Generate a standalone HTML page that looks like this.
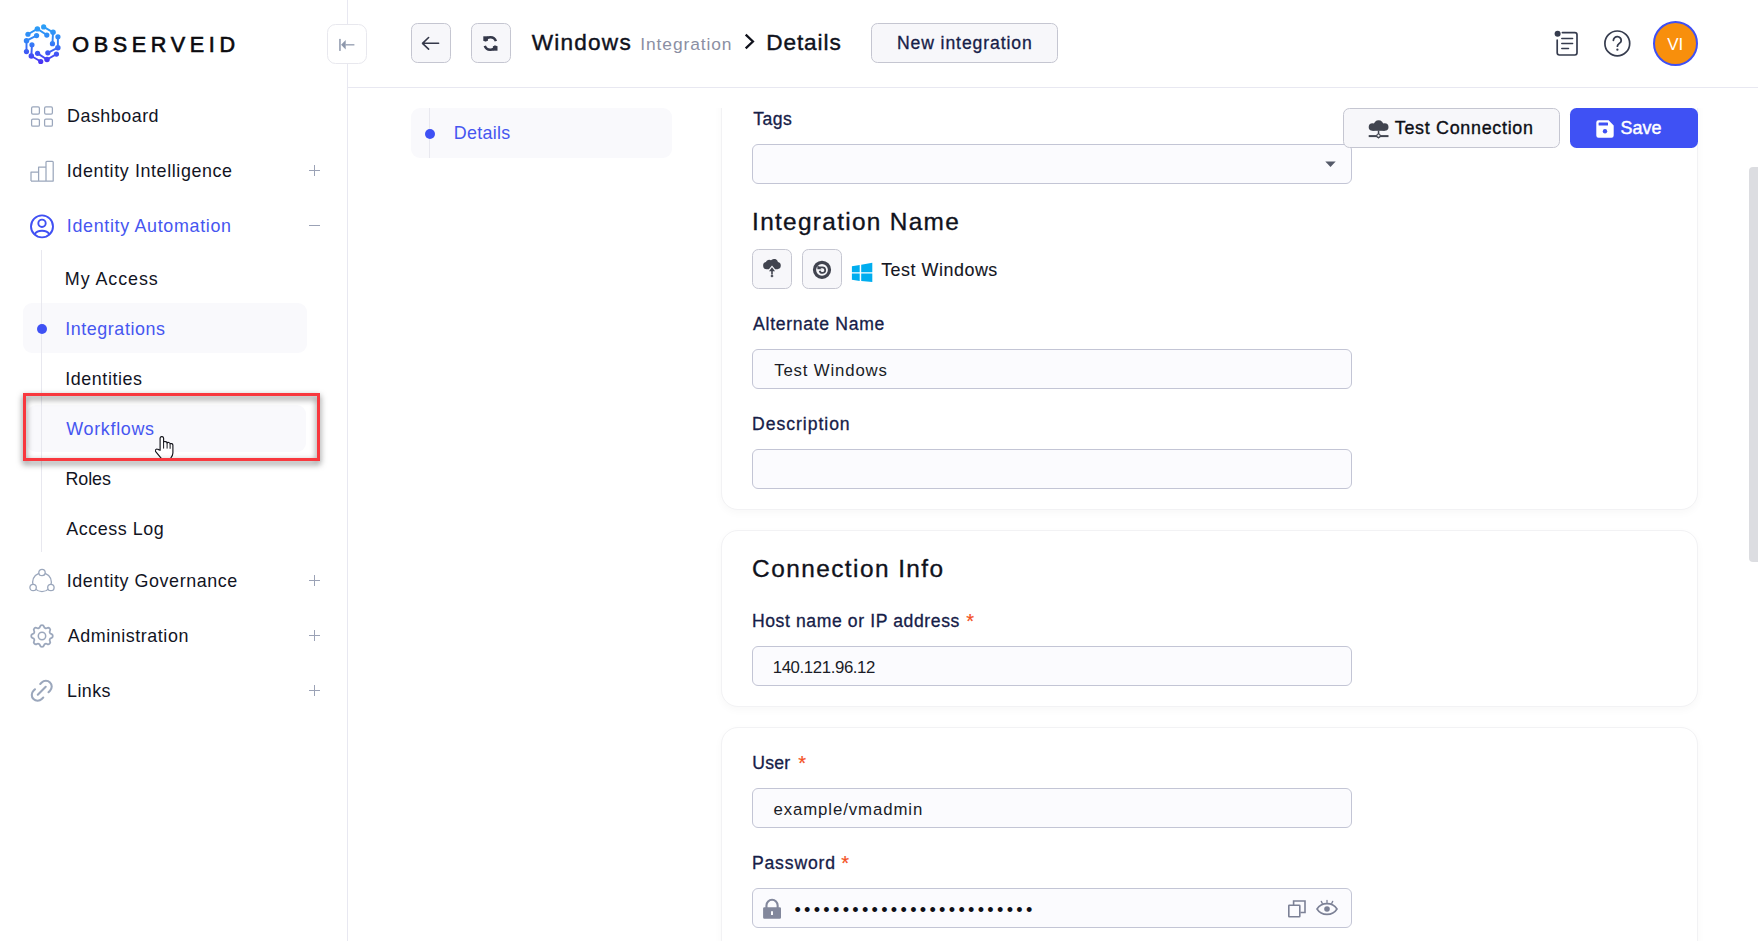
<!DOCTYPE html>
<html lang="en"><head><meta charset="utf-8"><title>ObserveID - Windows Integration Details</title>
<style>
*{box-sizing:border-box}
html,body{margin:0;padding:0}
body{width:1758px;height:941px;overflow:hidden;position:relative;background:#fff;font-family:"Liberation Sans",sans-serif;color:#12141f}
.t{position:absolute;white-space:nowrap;line-height:1;font-family:"Liberation Sans",sans-serif}
.abs{position:absolute}
svg{position:absolute;overflow:visible}
#sidebar{position:absolute;left:0;top:0;width:348px;height:941px;border-right:1px solid #e8e8f1;background:#fff}
#topbar{position:absolute;left:348px;top:0;width:1410px;height:88px;border-bottom:1px solid #e8e8f1;background:#fff}
.sqbtn{position:absolute;width:40px;height:40px;border:1px solid #c5c6d1;border-radius:6.5px;background:#f7f7fa}
.obtn{position:absolute;height:40px;border:1px solid #c5c6d1;border-radius:6.5px;background:#f7f7fa}
.card{position:absolute;left:721px;width:977px;background:#fff;border:1px solid #f2f2f4;border-radius:17px;box-shadow:0 3px 9px rgba(0,0,0,.03)}
.inp{position:absolute;left:752px;width:600px;height:40px;border:1px solid #c3c5d5;border-radius:6px;background:#fbfbfe}
.sel{position:absolute;border-radius:9px;background:#f9f9fc}
.dot{position:absolute;width:10px;height:10px;border-radius:50%;background:#3f51f4}
.vline{position:absolute;width:1px;background:#e8e8ef}
.pm{position:absolute;background:#9ba2b6}

</style></head>
<body>
<div id="sidebar"></div>
<div id="topbar"></div>

<!-- logo -->
<svg id="logo" style="left:20.600px;top:22.700px" width="42.400" height="42.400" viewBox="-22 -22 44 44">
  <defs>
    <linearGradient id="lg" gradientUnits="userSpaceOnUse" x1="0" y1="-19" x2="0" y2="19">
      <stop offset="0" stop-color="#2b9ff7"/><stop offset="0.45" stop-color="#3380f6"/><stop offset="1" stop-color="#4a33f3"/>
    </linearGradient>
  </defs>
  <g fill="none" stroke="url(#lg)" stroke-width="2" stroke-linejoin="round"><polyline points="-14.80,-10.30 -5.00,-15.90 4.80,-9.50"/><polyline points="1.52,-17.97 11.27,-12.28 10.63,-0.59"/><polyline points="16.32,-7.67 16.27,3.62 5.83,8.91"/><polyline points="14.80,10.30 5.00,15.90 -4.80,9.50"/><polyline points="-1.52,17.97 -11.27,12.28 -10.63,0.59"/><polyline points="-16.32,7.67 -16.27,-3.62 -5.83,-8.91"/></g>
  <g fill="url(#lg)"><circle cx="-14.80" cy="-10.30" r="2.7"/><circle cx="-5.00" cy="-15.90" r="2.85"/><circle cx="4.80" cy="-9.50" r="2.7"/><circle cx="1.52" cy="-17.97" r="2.7"/><circle cx="11.27" cy="-12.28" r="2.85"/><circle cx="10.63" cy="-0.59" r="2.7"/><circle cx="16.32" cy="-7.67" r="2.7"/><circle cx="16.27" cy="3.62" r="2.85"/><circle cx="5.83" cy="8.91" r="2.7"/><circle cx="14.80" cy="10.30" r="2.7"/><circle cx="5.00" cy="15.90" r="2.85"/><circle cx="-4.80" cy="9.50" r="2.7"/><circle cx="-1.52" cy="17.97" r="2.7"/><circle cx="-11.27" cy="12.28" r="2.85"/><circle cx="-10.63" cy="0.59" r="2.7"/><circle cx="-16.32" cy="7.67" r="2.7"/><circle cx="-16.27" cy="-3.62" r="2.85"/><circle cx="-5.83" cy="-8.91" r="2.7"/></g>
</svg>

<!-- collapse button -->
<div class="abs" style="left:327px;top:24px;width:40px;height:40px;border:1px solid #e8e8ee;border-radius:8.500px;background:#fff"></div>
<svg style="left:338px;top:37px" width="18" height="16" viewBox="0 0 18 16" fill="#8e98ac" stroke="none">
  <rect x="1.200" y="1.900" width="1.500" height="12"/><path d="M3.100 7.800L7.700 3v9.600z"/><rect x="7.500" y="7.200" width="8.900" height="1.250"/>
</svg>

<!-- nav icons -->
<svg style="left:30px;top:105px" width="24" height="24" viewBox="0 0 24 24" fill="none" stroke="#9ba7bc" stroke-width="1.25">
  <rect x="1.6" y="1.9" width="7.8" height="7.2" rx="1.3"/><rect x="14.6" y="1.9" width="7.8" height="7.2" rx="1.3"/>
  <rect x="1.6" y="14" width="7.8" height="7.2" rx="1.3"/><rect x="14.6" y="14" width="7.8" height="7.2" rx="1.3"/>
</svg>
<svg style="left:30px;top:160px" width="24" height="24" viewBox="0 0 24 24" fill="none" stroke="#9ba7bc" stroke-width="1.25" stroke-linejoin="round">
  <path d="M1 21V12h7.6v9M8.6 21V7h7.4v14M16 21V2.2a.8.8 0 0 1 .8-.8h5.6a.8.8 0 0 1 .8.8V21z M1 21h22"/>
</svg>
<svg style="left:30px;top:214px" width="24" height="25" viewBox="0 0 24 25" fill="none" stroke="#4050f3" stroke-width="1.9" stroke-linecap="round">
  <circle cx="12" cy="12.4" r="11"/><circle cx="12" cy="9.3" r="3.7"/><path d="M4.6 20.3c1.3-2.4 4-3.6 7.4-3.6s6.100 1.200 7.400 3.600"/>
</svg>
<svg style="left:29px;top:568px" width="26" height="26" viewBox="0 0 26 26" fill="#fff" stroke="#9ba7bc" stroke-width="1.3">
  <circle cx="13" cy="14.200" r="9.400" fill="none"/><circle cx="13" cy="4.500" r="3.200"/><circle cx="4.100" cy="19.500" r="3.200"/><circle cx="21.900" cy="19.500" r="3.200"/>
</svg>
<svg style="left:30px;top:624px" width="24" height="24" viewBox="0 0 24 24" fill="none" stroke="#9ba7bc" stroke-width="1.5" stroke-linecap="round" stroke-linejoin="round">
  <path d="M10.325 4.317c.426-1.756 2.924-1.756 3.350 0a1.724 1.724 0 0 0 2.573 1.066c1.543-.94 3.310.826 2.370 2.370a1.724 1.724 0 0 0 1.065 2.572c1.756.426 1.756 2.924 0 3.350a1.724 1.724 0 0 0-1.066 2.573c.940 1.543-.826 3.310-2.370 2.370a1.724 1.724 0 0 0-2.572 1.065c-.426 1.756-2.924 1.756-3.350 0a1.724 1.724 0 0 0-2.573-1.066c-1.543.940-3.310-.826-2.370-2.370a1.724 1.724 0 0 0-1.065-2.572c-1.756-.426-1.756-2.924 0-3.350a1.724 1.724 0 0 0 1.066-2.573c-.940-1.543.826-3.310 2.370-2.370 1 .608 2.296.070 2.572-1.065z" transform="translate(-2.400 -2.400) scale(1.2)"/>
  <circle cx="12" cy="12" r="3.700"/>
</svg>
<svg style="left:29.150px;top:677.650px" width="25.500" height="25.500" viewBox="0 0 24 24" fill="none" stroke="#9ba7bc" stroke-width="1.950" stroke-linecap="round" stroke-linejoin="round">
  <g transform="rotate(-45 12 12)"><path d="M15.500 6.500h2a5.500 5.500 0 0 1 0 11h-2m-7 0h-2a5.500 5.500 0 0 1 0-11h2"/><path d="M6.700 12h10.600"/></g>
</svg>

<!-- plus / minus -->
<div class="pm" style="left:309px;top:170px;width:11px;height:1px"></div><div class="pm" style="left:314px;top:165px;width:1px;height:11px"></div>
<div class="pm" style="left:309px;top:225px;width:11px;height:1px"></div>
<div class="pm" style="left:309px;top:580px;width:11px;height:1px"></div><div class="pm" style="left:314px;top:575px;width:1px;height:11px"></div>
<div class="pm" style="left:309px;top:635px;width:11px;height:1px"></div><div class="pm" style="left:314px;top:630px;width:1px;height:11px"></div>
<div class="pm" style="left:309px;top:690px;width:11px;height:1px"></div><div class="pm" style="left:314px;top:685px;width:1px;height:11px"></div>

<!-- submenu -->
<div class="sel" style="left:23px;top:303px;width:283.500px;height:49.500px"></div>
<div class="sel" style="left:27px;top:404.500px;width:279px;height:47.500px;background:#f9f9fc"></div>
<div class="vline" style="left:41px;top:250px;height:302px"></div>
<div class="dot" style="left:37px;top:324px"></div>
<!-- hand cursor -->
<svg style="left:155px;top:436px;overflow:hidden" width="19" height="23.5" viewBox="0 0 19 23.5" fill="#fff" stroke="#14151c" stroke-width="1.15" stroke-linejoin="round" stroke-linecap="round">
  <path d="M5.100 14.300V2.300a1.750 1.750 0 0 1 3.500 0V6.200c.300-1 3.300-.900 3.500.700.500-.900 2.900-.500 3 .900.800-.700 2.800-.200 2.800 1.500v7.600c0 2.400-1.100 3.800-2.400 5.600V25H6.500v-2.300L.700 15.600c-1.100-1.400.700-3.300 2.200-2.200z"/>
  <path d="M8.600 6.200v6M12.100 7.200v5M15.100 8.200v4.200" fill="none" stroke-width="1"/>
</svg>
<!-- red highlight box -->
<div class="abs" style="left:23px;top:393px;width:297px;height:68px;border:3px solid #f8383e;filter:drop-shadow(0 3px 3px rgba(0,0,0,.58))"></div>

<!-- header buttons -->
<div class="sqbtn" style="left:411px;top:23px"></div>
<svg style="left:421px;top:35px" width="20" height="16" viewBox="0 0 20 16" fill="none" stroke="#343849" stroke-width="1.600" stroke-linecap="round" stroke-linejoin="round"><path d="M17.600 8.300H1.500M7.600 2.500L1.500 8.300l6.100 5.800"/></svg>
<div class="sqbtn" style="left:471px;top:23px"></div>
<svg style="left:482px;top:35px" width="17" height="17" viewBox="0 0 17 17" fill="none" stroke="#343849" stroke-width="2.5">
  <path d="M3.000 6.400A5.700 5.700 0 0 1 13.900 6.100"/><path d="M13.700 10.600A5.700 5.700 0 0 1 2.800 10.900"/>
  <path d="M1.300 1.300h4.600v4.600h-4.600z" fill="#343849" stroke="none"/><path d="M10.900 11.100h4.600v4.600h-4.600z" fill="#343849" stroke="none"/>
</svg>
<svg style="left:744px;top:33px" width="12" height="17" viewBox="0 0 12 17" fill="none" stroke="#10121c" stroke-width="2.300" stroke-linecap="butt" stroke-linejoin="miter"><path d="M1.700 1.700l7.200 6.800-7.200 6.800"/></svg>
<div class="obtn" style="left:871px;top:23px;width:187px"></div>

<!-- header right icons -->
<svg style="left:1553px;top:29px" width="27" height="29" viewBox="0 0 27 29" fill="none" stroke="#363c4e" stroke-width="1.700" stroke-linecap="round" stroke-linejoin="round">
  <path d="M9.400 3.600h12.400a2.200 2.200 0 0 1 2.200 2.200v18a2.200 2.200 0 0 1-2.200 2.200H6.400a2.200 2.200 0 0 1-2.200-2.200V11.200"/>
  <path d="M8.800 9.500h10.800M8.800 14.500h10.800M8.800 19.500h6.700" stroke-width="1.500"/>
  <circle cx="4.600" cy="4.800" r="3" fill="#363c4e" stroke="none"/>
</svg>
<svg style="left:1603px;top:29px" width="29" height="29" viewBox="0 0 29 29" fill="none" stroke="#363c4e" stroke-width="1.700" stroke-linecap="round" stroke-linejoin="round">
  <circle cx="14.300" cy="14.400" r="12.400"/><path d="M10.400 11.300a3.900 3.900 0 0 1 7.800.4c0 2.500-3.800 2.900-3.800 5.500" stroke-width="1.800"/><circle cx="14.400" cy="20.700" r="1.150" fill="#363c4e" stroke="none"/>
</svg>
<div class="abs" style="left:1653px;top:21px;width:45px;height:45px;border-radius:50%;background:#f88f0c;border:2px solid #3f50f4"></div>

<!-- detail tab -->
<div class="sel" style="left:411px;top:108px;width:261px;height:50px"></div>
<div class="vline" style="left:429px;top:108px;height:50px"></div>
<div class="dot" style="left:424.500px;top:128.800px"></div>

<!-- cards -->
<div class="abs" style="left:700px;top:108px;width:1040px;height:833px;overflow:hidden">
  <div class="card" style="left:21px;top:-60px;height:462px"></div>
  <div class="card" style="left:21px;top:422px;height:177px"></div>
  <div class="card" style="left:21px;top:619px;height:400px"></div>
</div>

<!-- inputs -->
<div class="inp" style="top:144px"></div>
<svg style="left:1325px;top:161px" width="11" height="6" viewBox="0 0 11 6"><path d="M0.300 0.600h10.400L5.500 6z" fill="#555a69"/></svg>
<div class="inp" style="top:349px"></div>
<div class="inp" style="top:449px"></div>
<div class="inp" style="top:646px"></div>
<div class="inp" style="top:788px"></div>
<div class="inp" style="top:888px"></div>

<!-- action buttons -->
<div class="obtn" style="left:1343px;top:108px;width:217px"></div>
<svg style="left:1367px;top:119px" width="23" height="21" viewBox="0 0 23 21" fill="#40444f" stroke="none">
  <circle cx="5.500" cy="8" r="3.800"/><circle cx="11.600" cy="6.100" r="4.900"/><circle cx="17.700" cy="8" r="3.800"/><rect x="5.500" y="7" width="12.200" height="4.800"/>
  <rect x="10.800" y="11.600" width="1.500" height="3.500"/><rect x="1.700" y="16.100" width="19.800" height="2"/>
  <path d="M9.800 18.100h3.400l-1.700 1.600z"/>
  <circle cx="11.500" cy="16.700" r="1.700" fill="#f7f7fa" stroke="#40444f" stroke-width="1.100"/>
</svg>
<div class="abs" style="left:1570px;top:108px;width:128px;height:40px;border-radius:6.5px;background:#3f51f4"></div>
<svg style="left:1596px;top:120px" width="18" height="18" viewBox="0 0 18 18"><path d="M2.500 0.300h10.100l5.100 5.100v10.100a2.200 2.200 0 0 1-2.200 2.200h-13a2.200 2.200 0 0 1-2.200-2.200v-13A2.200 2.200 0 0 1 2.500.300z" fill="#fff"/><rect x="2.600" y="2.600" width="9.400" height="3" rx=".5" fill="#3f51f4"/><circle cx="9" cy="11.300" r="2.200" fill="#3f51f4"/></svg>

<!-- integration name row -->
<div class="sqbtn" style="left:752px;top:249px"></div>
<svg style="left:762px;top:259px" width="20" height="19" viewBox="0 0 20 19" fill="#41444f">
  <path d="M4.600 10.200a3.600 3.600 0 0 1-.700-7.100 3.700 3.700 0 0 1 5.100-1.800 4.100 4.100 0 0 1 6.900 1.600 3.700 3.700 0 0 1-.500 7.300h-2.300L10 6.600l-3.100 3.600z"/>
  <path d="M10 8.300l3 3.900h-2.200v3.200h-1.600v-3.200H7z"/><path d="M10 15.600l1.600 1.500-1.600 1.500-1.600-1.500z"/>
</svg>
<div class="sqbtn" style="left:802px;top:249px"></div>
<svg style="left:812px;top:260px" width="20" height="20" viewBox="0 0 20 20" fill="none">
  <circle cx="10" cy="9.800" r="7.500" stroke="#41444f" stroke-width="3.200"/>
  <path d="M6.800 7.300h3.600a2.800 2.800 0 1 1-2.700 3.400" stroke="#41444f" stroke-width="1.800" fill="none"/><path d="M5.400 5.100v4.200h4.200z" fill="#41444f"/>
</svg>
<svg style="left:851px;top:262px" width="22" height="21" viewBox="0 0 22 21" fill="#00adef">
  <path d="M0.900 4.300L8.700 3.100v7.100H0.900zM10.200 2.850L21.300 0.800v9.400H10.200zM0.900 11.600h7.800v7.300L0.900 17.800zM10.200 11.600h11.100V20L10.200 19.100z"/>
</svg>

<!-- password field -->
<svg style="left:762px;top:898px" width="20" height="21" viewBox="0 0 20 21" fill="#82879c">
  <path d="M3.400 10V7.400a6.650 6.650 0 0 1 13.300 0V10h-2.100V7.400a4.550 4.550 0 0 0-9.100 0V10z"/><path d="M2.400 9.300h15.300a1.300 1.300 0 0 1 1.300 1.300v8.800a1.300 1.300 0 0 1-1.300 1.300H2.400a1.300 1.300 0 0 1-1.300-1.300v-8.800a1.300 1.300 0 0 1 1.300-1.300zM9 13.200v3.800h2v-3.800z" fill-rule="evenodd"/>
</svg>

<svg style="left:1288px;top:900px" width="18" height="18" viewBox="0 0 18 18" fill="none" stroke="#7c8196" stroke-width="1.600"><rect x="0.800" y="5.200" width="11" height="11.500" rx="0.500"/><path d="M5.600 5V1h11.400v11.500h-4.600"/></svg>
<svg style="left:1316px;top:899px" width="22" height="17" viewBox="0 0 22 17" fill="none" stroke="#7c8196" stroke-width="1.600" stroke-linecap="round">
  <path d="M1 10c2.300-3.700 5.800-5.400 10-5.400s7.700 1.700 10 5.400c-2.300 3.700-5.800 5.400-10 5.400S3.300 13.700 1 10z"/><circle cx="11" cy="10" r="2.800" fill="#7c8196" stroke="none"/>
  <path d="M11 3.500V1.300M6.300 4.400L5.300 2.400M15.700 4.400l1-2" stroke-width="1.300"/>
</svg>

<!-- scrollbar -->
<div class="abs" style="left:1749px;top:167px;width:9px;height:395px;background:#dcdde1;border-radius:4px 0 0 4px"></div>

<span class="t" id="t0" style="left:72.19px;top:33.72px;font-size:21.6px;color:#0b0b0f;letter-spacing:4.659px;-webkit-text-stroke:0.65px #0b0b0f;">OBSERVEID</span>
<span class="t" id="t1" style="left:67.05px;top:107.85px;font-size:17.9px;color:#12141f;letter-spacing:0.500px;">Dashboard</span>
<span class="t" id="t2" style="left:66.79px;top:162.85px;font-size:17.9px;color:#12141f;letter-spacing:0.605px;">Identity Intelligence</span>
<span class="t" id="t3" style="left:66.79px;top:217.85px;font-size:17.9px;color:#4656f0;letter-spacing:0.670px;">Identity Automation</span>
<span class="t" id="t4" style="left:64.83px;top:270.85px;font-size:17.9px;color:#12141f;letter-spacing:0.921px;">My Access</span>
<span class="t" id="t5" style="left:65.22px;top:320.85px;font-size:17.9px;color:#4656f0;letter-spacing:0.566px;">Integrations</span>
<span class="t" id="t6" style="left:65.22px;top:370.85px;font-size:17.9px;color:#12141f;letter-spacing:0.581px;">Identities</span>
<span class="t" id="t7" style="left:66.32px;top:420.85px;font-size:17.9px;color:#4656f0;letter-spacing:0.691px;">Workflows</span>
<span class="t" id="t8" style="left:65.48px;top:470.85px;font-size:17.9px;color:#12141f;letter-spacing:-0.065px;">Roles</span>
<span class="t" id="t9" style="left:66.31px;top:520.85px;font-size:17.9px;color:#12141f;letter-spacing:0.549px;">Access Log</span>
<span class="t" id="t10" style="left:66.79px;top:572.85px;font-size:17.9px;color:#12141f;letter-spacing:0.572px;">Identity Governance</span>
<span class="t" id="t11" style="left:67.87px;top:627.85px;font-size:17.9px;color:#12141f;letter-spacing:0.548px;">Administration</span>
<span class="t" id="t12" style="left:67.05px;top:682.85px;font-size:17.9px;color:#12141f;letter-spacing:0.438px;">Links</span>
<span class="t" id="t13" style="left:531.74px;top:31.87px;font-size:22.6px;color:#10121c;letter-spacing:1.214px;-webkit-text-stroke:0.42px #10121c;">Windows</span>
<span class="t" id="t14" style="left:640.33px;top:36.27px;font-size:17.4px;color:#8b8fa3;letter-spacing:0.893px;">Integration</span>
<span class="t" id="t15" style="left:766.24px;top:31.87px;font-size:22.6px;color:#10121c;letter-spacing:0.903px;-webkit-text-stroke:0.42px #10121c;">Details</span>
<span class="t" id="t16" style="left:896.91px;top:35.10px;font-size:17.6px;color:#162048;letter-spacing:0.904px;-webkit-text-stroke:0.3px #162048;">New integration</span>
<span class="t" id="t17" style="left:1667.19px;top:35.61px;font-size:17.0px;color:#ffffff;letter-spacing:0.075px;">VI</span>
<span class="t" id="t18" style="left:453.87px;top:124.85px;font-size:17.9px;color:#4656f0;letter-spacing:0.287px;">Details</span>
<span class="t" id="t19" style="left:1394.76px;top:119.85px;font-size:17.9px;color:#0e0f16;letter-spacing:0.709px;-webkit-text-stroke:0.35px #0e0f16;">Test Connection</span>
<span class="t" id="t20" style="left:1620.50px;top:119.85px;font-size:17.9px;color:#ffffff;letter-spacing:0.023px;-webkit-text-stroke:0.45px #ffffff;">Save</span>
<span class="t" id="t21" style="left:753.27px;top:111.10px;font-size:17.6px;color:#162048;letter-spacing:0.489px;-webkit-text-stroke:0.3px #162048;">Tags</span>
<span class="t" id="t22" style="left:752.09px;top:210.35px;font-size:24.4px;color:#10121c;letter-spacing:1.305px;-webkit-text-stroke:0.35px #10121c;">Integration Name</span>
<span class="t" id="t23" style="left:881.16px;top:261.85px;font-size:17.9px;color:#14161f;letter-spacing:0.524px;-webkit-text-stroke:0.12px #14161f;">Test Windows</span>
<span class="t" id="t24" style="left:753.12px;top:316.10px;font-size:17.6px;color:#162048;letter-spacing:0.687px;-webkit-text-stroke:0.3px #162048;">Alternate Name</span>
<span class="t" id="t25" style="left:774.17px;top:362.78px;font-size:16.8px;color:#1a1c26;letter-spacing:0.839px;">Test Windows</span>
<span class="t" id="t26" style="left:752.10px;top:416.10px;font-size:17.6px;color:#162048;letter-spacing:0.956px;-webkit-text-stroke:0.3px #162048;">Description</span>
<span class="t" id="t27" style="left:752.11px;top:557.35px;font-size:24.4px;color:#10121c;letter-spacing:1.442px;-webkit-text-stroke:0.35px #10121c;">Connection Info</span>
<span class="t" id="t28" style="left:751.91px;top:613.10px;font-size:17.6px;color:#162048;letter-spacing:0.598px;-webkit-text-stroke:0.3px #162048;">Host name or IP address</span>
<span class="t" id="t29" style="left:966.32px;top:611.07px;font-size:20.0px;color:#f4511e;letter-spacing:0.000px;-webkit-text-stroke:0.2px #f4511e;">*</span>
<span class="t" id="t30" style="left:772.74px;top:659.78px;font-size:16.8px;color:#1a1c26;letter-spacing:-0.390px;">140.121.96.12</span>
<span class="t" id="t31" style="left:752.33px;top:755.10px;font-size:17.6px;color:#162048;letter-spacing:0.226px;-webkit-text-stroke:0.3px #162048;">User</span>
<span class="t" id="t32" style="left:798.33px;top:753.07px;font-size:20.0px;color:#f4511e;letter-spacing:0.000px;-webkit-text-stroke:0.2px #f4511e;">*</span>
<span class="t" id="t33" style="left:773.46px;top:801.78px;font-size:16.8px;color:#1a1c26;letter-spacing:0.908px;">example/vmadmin</span>
<span class="t" id="t34" style="left:751.91px;top:855.10px;font-size:17.6px;color:#162048;letter-spacing:0.849px;-webkit-text-stroke:0.3px #162048;">Password</span>
<span class="t" id="t35" style="left:841.32px;top:853.07px;font-size:20.0px;color:#f4511e;letter-spacing:0.000px;-webkit-text-stroke:0.2px #f4511e;">*</span>
<span class="t" id="t36" style="left:794.42px;top:900.59px;font-size:18.2px;color:#0e0f16;letter-spacing:3.279px;">•••••••••••••••••••••••••</span>

</body></html>
